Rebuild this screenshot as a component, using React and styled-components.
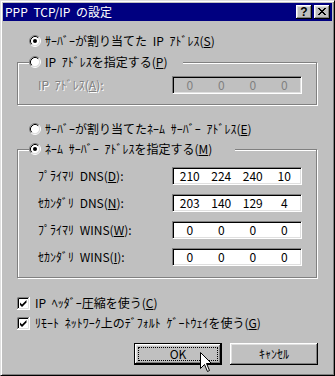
import React from "react";
import styled, { createGlobalStyle } from "styled-components";

const Global = createGlobalStyle`
  html, body { margin: 0; padding: 0; background: #c0c0c0; }
  body { font-family: "Noto Sans CJK JP", "Noto Sans", sans-serif; font-size: 12px; }
`;

const Window = styled.div`
  position: relative;
  width: 335px;
  height: 376px;
  box-sizing: border-box;
  background: #c0c0c0;
  border: 1px solid;
  border-color: #dfdfdf #000 #000 #dfdfdf;
  box-shadow: inset 1px 1px #fff, inset -1px -1px #808080;
  padding: 2px;
  display: flex;
  flex-direction: column;
  font-family: "Noto Sans CJK JP", "Noto Sans", sans-serif;
  font-size: 12px;
  line-height: 16px;
  color: #000;
  word-spacing: 3px;
  overflow: hidden;
`;

const TitleBar = styled.div`
  height: 18px;
  flex: none;
  background: #000080;
  color: #fff;
  display: flex;
  align-items: center;
  padding: 0 2px 0 2px;
`;

const TitleText = styled.span`
  white-space: pre;
`;

const TitleButtons = styled.div`
  margin-left: auto;
  display: flex;
  gap: 2px;
`;

const CaptionButton = styled.div`
  width: 16px;
  height: 14px;
  box-sizing: border-box;
  background: #c0c0c0;
  box-shadow: inset -1px -1px #000, inset 1px 1px #fff, inset -2px -2px #808080, inset 2px 2px #dfdfdf;
  display: flex;
  align-items: center;
  justify-content: center;
  color: #000;
  font-family: "Liberation Sans", Arial, sans-serif;
  font-weight: bold;
  font-size: 12px;
  line-height: 14px;
  padding-bottom: 1px;
`;

const Content = styled.div`
  display: flex;
  flex-direction: column;
  padding-left: 14px;
`;

const OptionRow = styled.div`
  display: flex;
  align-items: center;
  height: 16px;
  gap: ${(p) => p.$gap || 4}px;
  margin-top: ${(p) => p.$mt || 0}px;
  margin-left: ${(p) => p.$ml || 0}px;
  white-space: pre;
`;

const GroupBox = styled.div`
  width: 300px;
  box-sizing: border-box;
  border: 1px solid #808080;
  box-shadow: inset 1px 1px #fff, 1px 1px #fff;
  display: flex;
  flex-direction: column;
  padding: 0 0 ${(p) => p.$pb}px 20px;
  margin-top: ${(p) => p.$mt}px;
`;

const Legend = styled.div`
  width: ${(p) => p.$w}px;
  height: 16px;
  margin: -9px 0 0 -9px;
  background: #c0c0c0;
  display: flex;
  align-items: center;
  gap: 4px;
  white-space: pre;
`;

const FieldList = styled.div`
  display: flex;
  flex-direction: column;
  gap: 9px;
  margin-top: ${(p) => p.$mt}px;
`;

const FieldRow = styled.div`
  display: grid;
  grid-template-columns: 134px 130px;
  align-items: center;
`;

const Label = styled.span`
  white-space: pre;
  color: ${(p) => (p.$disabled ? "#808080" : "#000")};
  text-shadow: ${(p) => (p.$disabled ? "1px 1px 0 #fff" : "none")};
`;

const IPField = styled.div`
  height: 18px;
  box-sizing: border-box;
  border: 1px solid;
  border-color: #808080 #fff #fff #808080;
  box-shadow: inset 1px 1px #000, inset -1px -1px #dfdfdf;
  background: ${(p) => (p.$disabled ? "#c0c0c0" : "#fff")};
  color: ${(p) => (p.$disabled ? "#808080" : "#000")};
  display: grid;
  grid-template-columns: repeat(4, 1fr);
  align-items: center;
  padding: 0 1px;
  line-height: 16px;
`;

const Octet = styled.span`
  text-align: center;
`;

const ButtonRow = styled.div`
  width: 301px;
  display: flex;
  justify-content: flex-end;
  gap: 8px;
  margin-top: 12px;
`;

const Button = styled.div`
  width: 88px;
  height: 22px;
  box-sizing: border-box;
  background: #c0c0c0;
  display: flex;
  align-items: stretch;
  justify-content: center;
  border: ${(p) => (p.$default ? "1px solid #000" : "none")};
  padding: ${(p) => (p.$default ? "3px" : "0")};
  box-shadow: inset -1px -1px #000, inset 1px 1px #fff, inset -2px -2px #808080, inset 2px 2px #dfdfdf;
`;

const ButtonFace = styled.span`
  flex: 1;
  display: flex;
  align-items: center;
  justify-content: center;
  border: ${(p) => (p.$focus ? "1px dotted #000" : "none")};
  line-height: 14px;
`;

const Cursor = styled.svg`
  position: absolute;
  left: 199px;
  top: 351px;
`;

const RadioIcon = ({ checked }) => (
  <svg width="12" height="12" viewBox="0 0 12 12">
    <circle cx="6" cy="6" r="4.5" fill="#fff" />
    <path d="M2.11 9.89A5.5 5.5 0 0 1 9.89 2.11" stroke="#808080" fill="none" />
    <path d="M9.89 2.11A5.5 5.5 0 0 1 2.11 9.89" stroke="#fff" fill="none" />
    <path d="M2.82 9.18A4.5 4.5 0 0 1 9.18 2.82" stroke="#000" fill="none" />
    <path d="M9.18 2.82A4.5 4.5 0 0 1 2.82 9.18" stroke="#dfdfdf" fill="none" />
    {checked && <circle cx="6" cy="6" r="2" fill="#000" />}
  </svg>
);

const CheckIcon = ({ checked }) => (
  <svg width="13" height="13" viewBox="0 0 13 13">
    <rect x="0" y="0" width="13" height="13" fill="#fff" />
    <path d="M0.5 12V0.5H12" stroke="#808080" fill="none" />
    <path d="M0.5 12.5H12.5V0" stroke="#fff" fill="none" />
    <path d="M1.5 11V1.5H11" stroke="#000" fill="none" />
    <path d="M1.5 11.5H11.5V1" stroke="#dfdfdf" fill="none" />
    {checked && <path d="M3 5.5L5 7.5L9.5 3V5.5L5 10L3 8Z" fill="#000" />}
  </svg>
);

const CloseGlyph = () => (
  <svg width="8" height="7" viewBox="0 0 8 7">
    <path
      d="M0 0h2v1h1v1h2V1h1V0h2v1H7v1H6v1H5v1h1v1h1v1h1v1H6V6H5V5H3v1H2v1H0V6h1V5h1V4h1V3H2V2H1V1H0z"
      fill="#000"
    />
  </svg>
);

const IP = ({ values, disabled }) => (
  <IPField $disabled={disabled}>
    {values.map((v, i) => (
      <Octet key={i}>{v}</Octet>
    ))}
  </IPField>
);

const nameServers = [
  { label: "ﾌﾟﾗｲﾏﾘ DNS(", key: "D", values: ["210", "224", "240", "10"] },
  { label: "ｾｶﾝﾀﾞﾘ DNS(", key: "N", values: ["203", "140", "129", "4"] },
  { label: "ﾌﾟﾗｲﾏﾘ WINS(", key: "W", values: ["0", "0", "0", "0"] },
  { label: "ｾｶﾝﾀﾞﾘ WINS(", key: "I", values: ["0", "0", "0", "0"] },
];

export default function App() {
  return (
    <>
      <Global />
      <Window>
        <TitleBar>
          <TitleText>PPP TCP/IP の設定</TitleText>
          <TitleButtons>
            <CaptionButton>?</CaptionButton>
            <CaptionButton>
              <CloseGlyph />
            </CaptionButton>
          </TitleButtons>
        </TitleBar>
        <Content>
          <OptionRow $mt={12} $ml={12}>
            <RadioIcon checked />
            <span>
              ｻｰﾊﾞｰが割り当てた IP ｱﾄﾞﾚｽ(<u>S</u>)
            </span>
          </OptionRow>

          <GroupBox $mt={13} $pb={10}>
            <Legend $w={154}>
              <RadioIcon />
              <span>
                IP ｱﾄﾞﾚｽを指定する(<u>P</u>)
              </span>
            </Legend>
            <FieldList $mt={6}>
              <FieldRow>
                <Label $disabled>
                  IP ｱﾄﾞﾚｽ(<u>A</u>):
                </Label>
                <IP values={["0", "0", "0", "0"]} disabled />
              </FieldRow>
            </FieldList>
          </GroupBox>

          <OptionRow $mt={16} $ml={12}>
            <RadioIcon />
            <span>
              ｻｰﾊﾞｰが割り当てたﾈｰﾑ ｻｰﾊﾞｰ ｱﾄﾞﾚｽ(<u>E</u>)
            </span>
          </OptionRow>

          <GroupBox $mt={12} $pb={11}>
            <Legend $w={206}>
              <RadioIcon checked />
              <span>
                ﾈｰﾑ ｻｰﾊﾞｰ ｱﾄﾞﾚｽを指定する(<u>M</u>)
              </span>
            </Legend>
            <FieldList $mt={10}>
              {nameServers.map((s) => (
                <FieldRow key={s.key}>
                  <Label>
                    {s.label}
                    <u>{s.key}</u>):
                  </Label>
                  <IP values={s.values} />
                </FieldRow>
              ))}
            </FieldList>
          </GroupBox>

          <OptionRow $mt={17} $gap={5}>
            <CheckIcon checked />
            <span>
              IP ﾍｯﾀﾞｰ圧縮を使う(<u>C</u>)
            </span>
          </OptionRow>
          <OptionRow $mt={4} $gap={5}>
            <CheckIcon checked />
            <span>
              ﾘﾓｰﾄ ﾈｯﾄﾜｰｸ上のﾃﾞﾌｫﾙﾄ ｹﾞｰﾄｳｪｲを使う(<u>G</u>)
            </span>
          </OptionRow>

          <ButtonRow>
            <Button $default>
              <ButtonFace $focus>OK</ButtonFace>
            </Button>
            <Button>
              <ButtonFace>ｷｬﾝｾﾙ</ButtonFace>
            </Button>
          </ButtonRow>
        </Content>
        <Cursor width="13" height="21" viewBox="0 0 13 21">
          <path
            d="M0.5 0.5V16.5L4.5 12.5L7.5 19.5L9.5 18.5L6.5 11.5H11.5Z"
            fill="#fff"
            stroke="#000"
            strokeLinejoin="miter"
          />
        </Cursor>
      </Window>
    </>
  );
}
